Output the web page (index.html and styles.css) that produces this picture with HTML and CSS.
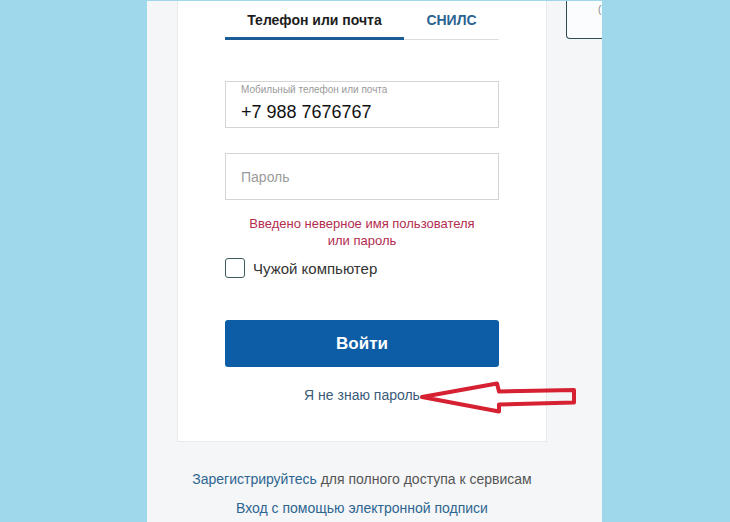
FILE: index.html
```html
<!DOCTYPE html>
<html lang="ru">
<head>
  <meta charset="UTF-8" />
  <meta name="viewport" content="width=device-width,initial-scale=1" />
  <title>Вход</title>
  <link rel="stylesheet" href="styles.css">
</head>
<body>
  <div class="panel">
    <!-- левая колонка: форма входа -->
    <div class="column">
      <div class="card">
        <div class="tabs">
          <div class="tab active">Телефон или почта</div>
          <div class="tab second">СНИЛС</div>
        </div>

        <div class="field filled">
          <span class="field-label">Мобильный телефон или почта</span>
          <span class="field-value">+7 988 7676767</span>
        </div>

        <div class="field empty">
          <span class="placeholder">Пароль</span>
        </div>

        <div class="error">Введено неверное имя пользователя<br>или пароль</div>

        <label class="check">
          <span class="box"></span>
          <span>Чужой компьютер</span>
        </label>

        <button class="btn" type="button">Войти</button>

        <div class="forgot"><a href="#">Я не знаю пароль</a></div>

        <!-- стрелка поверх формы -->
        <svg class="arrow" width="164" height="40" viewBox="0 0 164 40">
          <path d="M4 18 L79 4.5 L81 12.5 L156 11 L156 23.5 L81 25.5 L81 32.5 Z" fill="none" stroke="#d52131" stroke-width="4" stroke-linejoin="round"/>
        </svg>
      </div>

      <div class="footer">
        <p><a href="#">Зарегистрируйтесь</a> для полного доступа к сервисам</p>
        <p><a href="#">Вход с помощью электронной подписи</a></p>
      </div>
    </div>

    <!-- правый блок (обрезан) -->
    <div class="side-box"><span>(</span></div>
  </div>
</body>
</html>
```

FILE: styles.css
```css
body { margin: 0; background: #9ed8ea; font-family: "Liberation Sans", Arial, sans-serif; color: #333; }
a { text-decoration: none; }
.panel { display: flex; align-items: flex-start; width: 455px; min-height: 521px; margin: 1px 0 0 147px; background: #f5f6f7; overflow: hidden; }
.column { width: 370px; margin-left: 30px; }

.card { position: relative; box-sizing: border-box; width: 370px; padding: 0 47px 37px; background: #fff; border: 1px solid #e7e9eb; border-top: none; }

.tabs { display: flex; border-bottom: 1px solid #dcdcdc; }
.tab { padding: 10px 0 8px; line-height: 18px; font-size: 14px; font-weight: bold; text-align: center; border-bottom: 3px solid transparent; margin-bottom: -1px; }
.tab.active { width: 179px; color: #1d1d1d; border-bottom-color: #1c5d96; }
.tab.second { width: 95px; color: #2b6391; }

.field { box-sizing: border-box; height: 47px; border: 1px solid #d5d5d5; padding: 0 15px; display: flex; flex-direction: column; }
.field.filled { margin-top: 41px; padding-top: 2px; }
.field.empty { margin-top: 25px; justify-content: center; }
.field-label { font-size: 10px; line-height: 12px; color: #9a9a9a; }
.field-value { margin-top: 5px; font-size: 18px; line-height: 22px; color: #111; }
.placeholder { font-size: 14px; color: #9b9b9b; }

.error { margin-top: 15px; font-size: 13px; line-height: 17px; color: #b32c50; text-align: center; }

.check { display: flex; align-items: center; gap: 8px; margin-top: 9px; height: 20px; font-size: 15px; color: #333; }
.check .box { box-sizing: border-box; width: 20px; height: 20px; border: 1.5px solid #3f5a60; border-radius: 3px; }

.btn { display: block; width: 274px; height: 47px; margin-top: 42px; border: none; border-radius: 3px; background: #0c5da6; color: #fff; font-family: inherit; font-size: 17px; font-weight: bold; }

.forgot { margin-top: 19px; line-height: 18px; text-align: center; font-size: 14px; }
.forgot a { color: #3b5b78; }

.arrow { position: absolute; left: 240px; top: 378px; }

.footer { margin-top: 27px; text-align: center; font-size: 14px; color: #555; }
.footer p { margin: 0 0 9px; line-height: 20px; }
.footer a { color: #2d6592; }

.side-box { flex: none; box-sizing: border-box; width: 60px; height: 39px; margin-left: 19px; margin-top: -1px; background: #fafcfd; border: 1px solid #2e4b58; border-top: none; border-bottom-left-radius: 4px; font-size: 10px; color: #888; }
.side-box span { display: block; padding: 4px 0 0 31px; }
```
